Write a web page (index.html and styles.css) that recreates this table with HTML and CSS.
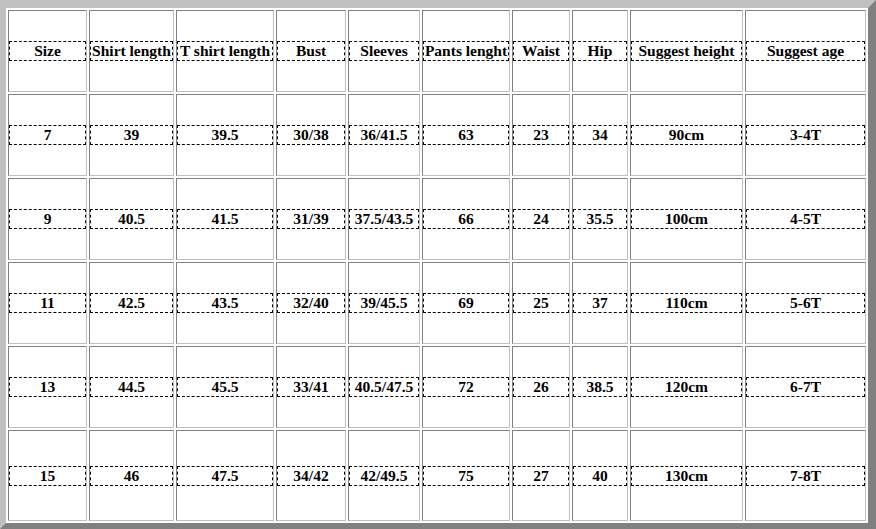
FILE: index.html
```html
<!DOCTYPE html>
<html>
<head>
<meta charset="utf-8">
<title>Size chart</title>
<link rel="stylesheet" href="styles.css">
</head>
<body>
<div class="sheet">
  <div class="cell"><div class="tag">Size</div></div>
  <div class="cell"><div class="tag">Shirt length</div></div>
  <div class="cell"><div class="tag">T shirt length</div></div>
  <div class="cell"><div class="tag">Bust</div></div>
  <div class="cell"><div class="tag">Sleeves</div></div>
  <div class="cell"><div class="tag">Pants lenght</div></div>
  <div class="cell"><div class="tag">Waist</div></div>
  <div class="cell"><div class="tag">Hip</div></div>
  <div class="cell"><div class="tag">Suggest height</div></div>
  <div class="cell"><div class="tag">Suggest age</div></div>

  <div class="cell"><div class="tag">7</div></div>
  <div class="cell"><div class="tag">39</div></div>
  <div class="cell"><div class="tag">39.5</div></div>
  <div class="cell"><div class="tag">30/38</div></div>
  <div class="cell"><div class="tag">36/41.5</div></div>
  <div class="cell"><div class="tag">63</div></div>
  <div class="cell"><div class="tag">23</div></div>
  <div class="cell"><div class="tag">34</div></div>
  <div class="cell"><div class="tag">90cm</div></div>
  <div class="cell"><div class="tag">3-4T</div></div>

  <div class="cell"><div class="tag">9</div></div>
  <div class="cell"><div class="tag">40.5</div></div>
  <div class="cell"><div class="tag">41.5</div></div>
  <div class="cell"><div class="tag">31/39</div></div>
  <div class="cell"><div class="tag">37.5/43.5</div></div>
  <div class="cell"><div class="tag">66</div></div>
  <div class="cell"><div class="tag">24</div></div>
  <div class="cell"><div class="tag">35.5</div></div>
  <div class="cell"><div class="tag">100cm</div></div>
  <div class="cell"><div class="tag">4-5T</div></div>

  <div class="cell"><div class="tag">11</div></div>
  <div class="cell"><div class="tag">42.5</div></div>
  <div class="cell"><div class="tag">43.5</div></div>
  <div class="cell"><div class="tag">32/40</div></div>
  <div class="cell"><div class="tag">39/45.5</div></div>
  <div class="cell"><div class="tag">69</div></div>
  <div class="cell"><div class="tag">25</div></div>
  <div class="cell"><div class="tag">37</div></div>
  <div class="cell"><div class="tag">110cm</div></div>
  <div class="cell"><div class="tag">5-6T</div></div>

  <div class="cell"><div class="tag">13</div></div>
  <div class="cell"><div class="tag">44.5</div></div>
  <div class="cell"><div class="tag">45.5</div></div>
  <div class="cell"><div class="tag">33/41</div></div>
  <div class="cell"><div class="tag">40.5/47.5</div></div>
  <div class="cell"><div class="tag">72</div></div>
  <div class="cell"><div class="tag">26</div></div>
  <div class="cell"><div class="tag">38.5</div></div>
  <div class="cell"><div class="tag">120cm</div></div>
  <div class="cell"><div class="tag">6-7T</div></div>

  <div class="cell"><div class="tag">15</div></div>
  <div class="cell"><div class="tag">46</div></div>
  <div class="cell"><div class="tag">47.5</div></div>
  <div class="cell"><div class="tag">34/42</div></div>
  <div class="cell"><div class="tag">42/49.5</div></div>
  <div class="cell"><div class="tag">75</div></div>
  <div class="cell"><div class="tag">27</div></div>
  <div class="cell"><div class="tag">40</div></div>
  <div class="cell"><div class="tag">130cm</div></div>
  <div class="cell"><div class="tag">7-8T</div></div>
</div>
</body>
</html>
```
FILE: styles.css
```css
html, body {
  margin: 0;
  padding: 0;
  background: #ffffff;
}

.sheet {
  box-sizing: border-box;
  width: 876px;
  height: 529px;
  display: grid;
  grid-template-columns: 79px 85px 98px 70px 72px 88px 58px 56px 113px 121px;
  grid-template-rows: repeat(5, 82px) 91px;
  gap: 2px;
  padding: 2px;
  border-style: solid;
  border-width: 8px 8px 6px 6px;
  border-color: #c0c0c0 #808080 #808080 #c0c0c0;
  background: #ffffff;
}

.cell {
  box-sizing: border-box;
  display: flex;
  align-items: center;
  border-style: solid;
  border-width: 1px;
  border-color: #808080 #c0c0c0 #c0c0c0 #808080;
}

.tag {
  box-sizing: border-box;
  width: 100%;
  border: 1px dashed #000000;
  font-family: "Liberation Serif", "Times New Roman", serif;
  font-weight: bold;
  font-size: 15.5px;
  line-height: 18px;
  text-align: center;
  color: #000000;
  white-space: nowrap;
}
```
